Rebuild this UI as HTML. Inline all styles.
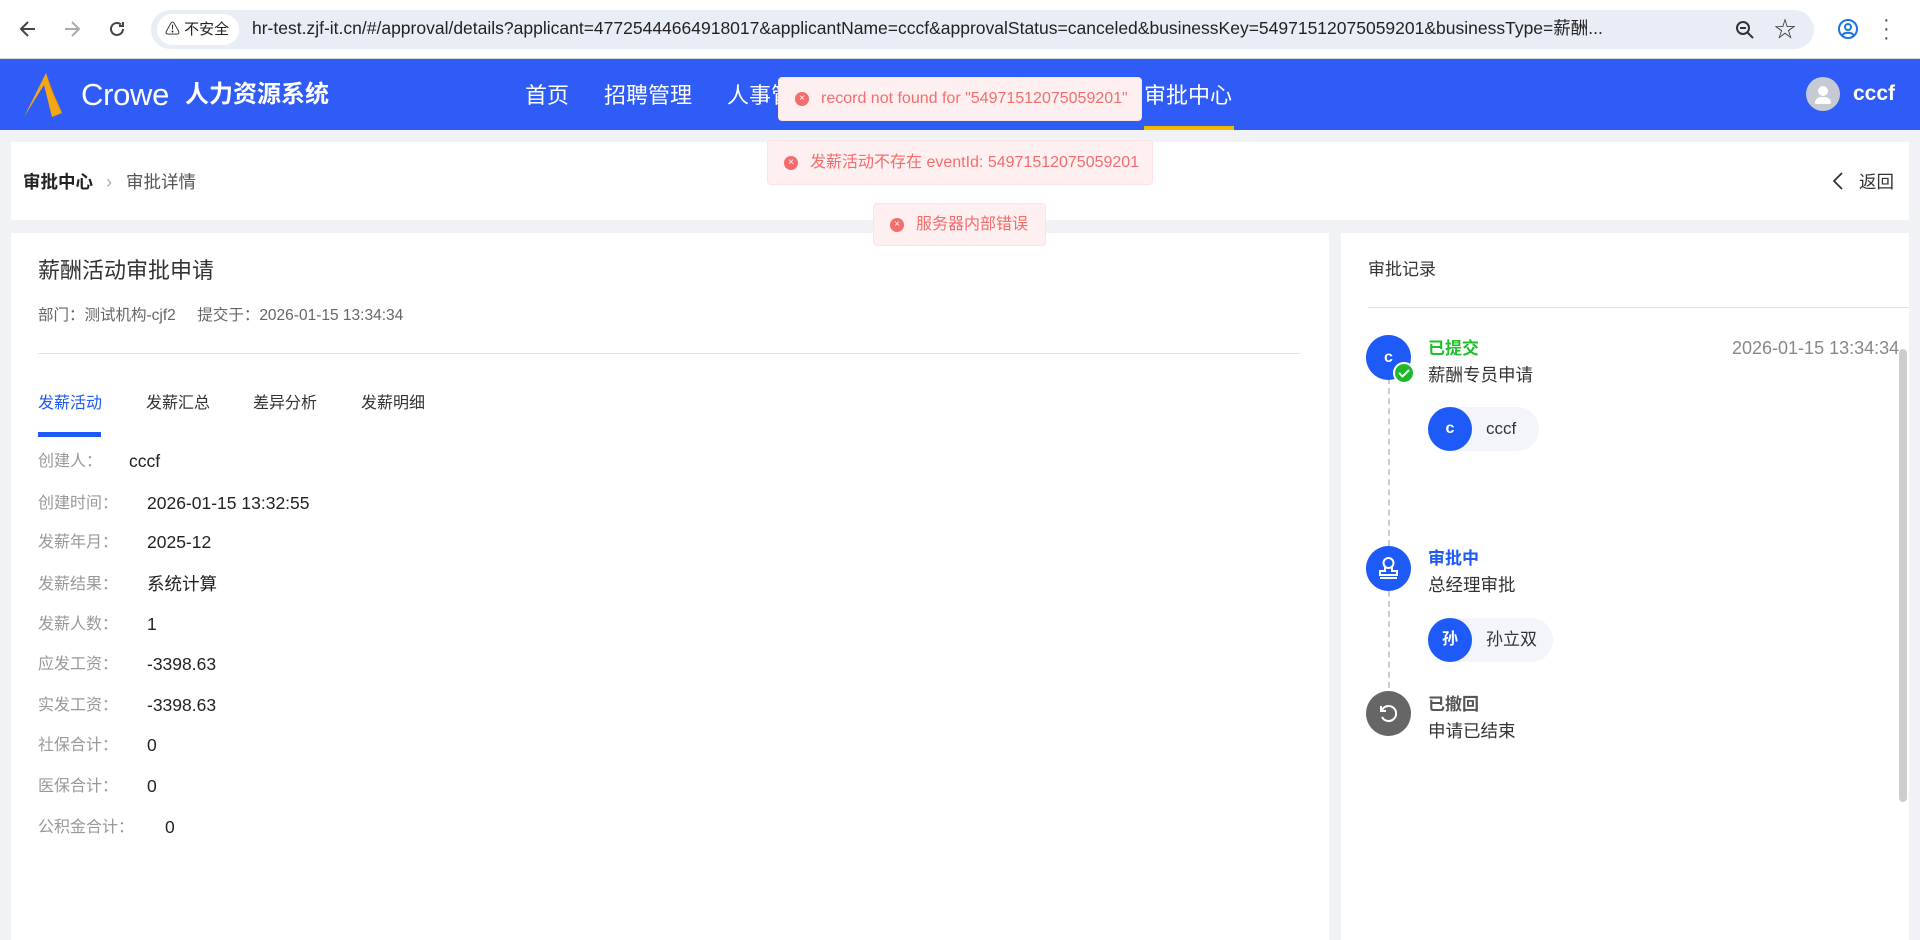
<!DOCTYPE html>
<html><head><meta charset="utf-8">
<style>
*{margin:0;padding:0;box-sizing:border-box}
body{width:1920px;height:940px;overflow:hidden;background:#f0f2f5;font-family:"Liberation Sans","Noto Sans CJK SC",sans-serif;position:relative;color:#333}
.a{position:absolute;white-space:nowrap;line-height:1.25}
.chrome{left:0;top:0;width:1920px;height:59px;background:#fff;border-bottom:1px solid #dadce0}
.url{left:151px;top:10px;width:1663px;height:39px;background:#e9eef6;border-radius:20px}
.hdr{left:0;top:59px;width:1920px;height:71px;background:#2f5bf6}
.nav{top:82px;color:#fff;font-size:22px}
.toast{background:#fef0f0;border:1px solid #fde2e2;border-radius:4px;color:#f56c6c;font-size:16px;display:flex;align-items:center;padding-left:16px}
.toast i{display:inline-block;width:14px;height:14px;border-radius:50%;background:#f56c6c;color:#fff;font-style:normal;font-size:10px;line-height:14px;text-align:center;margin-right:12px}
.card{background:#fff}
.lab{color:#999;font-size:16px;line-height:22px;margin-top:3px}
.val{color:#222;font-size:17.5px;line-height:22px;margin-top:2px}
.dot{width:45px;height:45px;border-radius:50%;background:#1e5af8;color:#fff;text-align:center;line-height:45px;font-weight:bold}
.chip{height:44px;border-radius:22px;background:#f3f5fa;font-size:17px;color:#333;line-height:44px}
.chip b{display:inline-block;width:44px;height:44px;border-radius:50%;background:#1e5af8;color:#fff;text-align:center;vertical-align:top;margin-right:14px;font-size:16px}
</style></head><body>
<div class="a chrome"></div>
<svg class="a" style="left:18px;top:19px" width="20" height="20" viewBox="0 0 20 20"><path d="M17 10H4M10 3L3 10l7 7" stroke="#444" stroke-width="2" fill="none"/></svg>
<svg class="a" style="left:62px;top:19px" width="20" height="20" viewBox="0 0 20 20"><path d="M3 10h13M10 3l7 7-7 7" stroke="#aaa" stroke-width="2" fill="none"/></svg>
<svg class="a" style="left:107px;top:19px" width="20" height="20" viewBox="0 0 20 20"><path d="M16 10a6 6 0 1 1-2-4.5M16 3v4h-4" stroke="#444" stroke-width="2" fill="none"/></svg>
<div class="a url"></div>
<div class="a" style="left:157px;top:14px;width:82px;height:31px;background:#fff;border-radius:16px;font-size:15px;line-height:31px;padding-left:8px;color:#222">⚠ 不安全</div>
<div class="a" style="left:252px;top:18px;font-size:17.5px;color:#222">hr-test.zjf-it.cn/#/approval/details?applicant=47725444664918017&amp;applicantName=cccf&amp;approvalStatus=canceled&amp;businessKey=54971512075059201&amp;businessType=薪酬...</div>
<svg class="a" style="left:1734px;top:19px" width="22" height="22" viewBox="0 0 22 22"><circle cx="9" cy="9" r="6" stroke="#333" stroke-width="2" fill="none"/><path d="M13.5 13.5L19 19M6 9h6" stroke="#333" stroke-width="2"/></svg>
<div class="a" style="left:1774px;top:16px;font-size:22px;color:#333">☆</div>
<svg class="a" style="left:1836px;top:17px" width="24" height="24" viewBox="0 0 24 24"><circle cx="12" cy="12" r="9" stroke="#1a73e8" stroke-width="2" fill="none"/><circle cx="12" cy="10" r="3" stroke="#1a73e8" stroke-width="2" fill="none"/><path d="M6.5 18c2-3 9-3 11 0" stroke="#1a73e8" stroke-width="2" fill="none"/></svg>
<div class="a" style="left:1883px;top:16px;font-size:20px;color:#444;line-height:9px">·<br>·<br>·</div>

<div class="a hdr"></div>
<svg class="a" style="left:22px;top:71px" width="48" height="48" viewBox="0 0 48 48"><path d="M24 2L2 46 22 14 30 46 40 42 27 12z" fill="#f3a712"/><path d="M24 2L38 40 28 16z" fill="#e08a0a"/></svg>
<div class="a" style="left:81px;top:76px;font-size:31px;color:#fff;letter-spacing:-0.3px">Crowe</div>
<div class="a" style="left:185px;top:80px;font-size:24px;color:#fff;font-weight:bold">人力资源系统</div>
<div class="a nav" style="left:525px">首页</div>
<div class="a nav" style="left:604px">招聘管理</div>
<div class="a nav" style="left:727px">人事管理</div>
<div class="a nav" style="left:1144px">审批中心</div>
<div class="a" style="left:1144px;top:126px;width:90px;height:4px;background:#f5b800"></div>
<div class="a" style="left:1806px;top:77px;width:34px;height:34px;border-radius:50%;background:#c6cad3"><div style="position:absolute;left:12px;top:9px;width:10px;height:10px;border-radius:50%;background:#fff"></div><div style="position:absolute;left:9px;top:20px;width:16px;height:7px;border-radius:6px 6px 1px 1px;background:#fff"></div></div>
<div class="a" style="left:1853px;top:81px;font-size:21px;color:#fff;font-weight:bold">cccf</div>

<div class="a card" style="left:11px;top:142px;width:1898px;height:78px"></div>
<div class="a" style="left:23px;top:172px;font-size:17.5px;font-weight:bold;color:#222">审批中心</div>
<div class="a" style="left:106px;top:171px;font-size:18px;color:#aaa">›</div>
<div class="a" style="left:126px;top:172px;font-size:17.5px;color:#555">审批详情</div>
<svg class="a" style="left:1832px;top:171px" width="12" height="20" viewBox="0 0 12 20"><path d="M10 2L2 10l8 8" stroke="#333" stroke-width="1.8" fill="none"/></svg>
<div class="a" style="left:1859px;top:172px;font-size:17.5px;color:#333">返回</div>

<div class="a card" style="left:11px;top:233px;width:1318px;height:707px"></div>
<div class="a" style="left:38px;top:257px;font-size:22px;color:#333">薪酬活动审批申请</div>
<div class="a" style="left:38px;top:306px;font-size:15.5px;color:#666">部门：测试机构-cjf2 &nbsp;&nbsp;&nbsp; 提交于：2026-01-15 13:34:34</div>
<div class="a" style="left:38px;top:353px;width:1262px;height:1px;background:#e2e2e2"></div>
<div class="a" style="left:38px;top:394px;font-size:16px;color:#1e5af8">发薪活动</div>
<div class="a" style="left:146px;top:394px;font-size:16px;color:#333">发薪汇总</div>
<div class="a" style="left:253px;top:394px;font-size:16px;color:#333">差异分析</div>
<div class="a" style="left:361px;top:394px;font-size:16px;color:#333">发薪明细</div>
<div class="a" style="left:38px;top:432px;width:63px;height:5px;background:#1e5af8"></div>

<div class="a lab" style="left:38px;top:448px">创建人：</div><div class="a val" style="left:129px;top:448px">cccf</div>
<div class="a lab" style="left:38px;top:490px">创建时间：</div><div class="a val" style="left:147px;top:490px">2026-01-15 13:32:55</div>
<div class="a lab" style="left:38px;top:529px">发薪年月：</div><div class="a val" style="left:147px;top:529px">2025-12</div>
<div class="a lab" style="left:38px;top:571px">发薪结果：</div><div class="a val" style="left:147px;top:571px">系统计算</div>
<div class="a lab" style="left:38px;top:611px">发薪人数：</div><div class="a val" style="left:147px;top:611px">1</div>
<div class="a lab" style="left:38px;top:651px">应发工资：</div><div class="a val" style="left:147px;top:651px">-3398.63</div>
<div class="a lab" style="left:38px;top:692px">实发工资：</div><div class="a val" style="left:147px;top:692px">-3398.63</div>
<div class="a lab" style="left:38px;top:732px">社保合计：</div><div class="a val" style="left:147px;top:732px">0</div>
<div class="a lab" style="left:38px;top:773px">医保合计：</div><div class="a val" style="left:147px;top:773px">0</div>
<div class="a lab" style="left:38px;top:814px">公积金合计：</div><div class="a val" style="left:165px;top:814px">0</div>

<div class="a card" style="left:1341px;top:233px;width:568px;height:707px"></div>
<div class="a" style="left:1368px;top:259px;font-size:17px;color:#333">审批记录</div>
<div class="a" style="left:1368px;top:307px;width:541px;height:1px;background:#e2e2e2"></div>
<div class="a" style="left:1388px;top:378px;width:0;height:320px;border-left:2px dashed #ccc"></div>
<div class="a dot" style="left:1366px;top:335px;font-size:16px">c</div>
<div class="a" style="left:1393px;top:362px;width:22px;height:22px;border-radius:50%;background:#1fb82c;border:2px solid #fff"><svg width="18" height="18" viewBox="0 0 18 18" style="display:block"><path d="M4 9l3.5 3.5L14 6" stroke="#fff" stroke-width="2" fill="none"/></svg></div>
<div class="a" style="left:1428px;top:338px;font-size:17px;font-weight:bold;color:#1fbf2b">已提交</div>
<div class="a" style="left:1732px;top:337px;font-size:18px;color:#888">2026-01-15 13:34:34</div>
<div class="a" style="left:1428px;top:365px;font-size:17.5px;color:#333">薪酬专员申请</div>
<div class="a chip" style="left:1428px;top:407px;width:111px"><b>c</b>cccf</div>

<div class="a dot" style="left:1366px;top:546px"><svg width="45" height="45" viewBox="0 0 45 45"><circle cx="22.5" cy="17" r="5" stroke="#fff" stroke-width="2" fill="none"/><path d="M19 21v4h-5v4h17v-4h-5v-4M14 32h17" stroke="#fff" stroke-width="2" fill="none"/></svg></div>
<div class="a" style="left:1428px;top:548px;font-size:17px;font-weight:bold;color:#1e5af8">审批中</div>
<div class="a" style="left:1428px;top:575px;font-size:17.5px;color:#333">总经理审批</div>
<div class="a chip" style="left:1428px;top:618px;width:125px"><b>孙</b>孙立双</div>

<div class="a dot" style="left:1366px;top:691px;background:#666"><svg width="45" height="45" viewBox="0 0 45 45"><path d="M16 19a7.5 7.5 0 1 1 0 7" stroke="#fff" stroke-width="2" fill="none"/><path d="M15 15v5h5" stroke="#fff" stroke-width="2" fill="none"/></svg></div>
<div class="a" style="left:1428px;top:694px;font-size:17px;font-weight:bold;color:#555">已撤回</div>
<div class="a" style="left:1428px;top:721px;font-size:17.5px;color:#333">申请已结束</div>
<div class="a" style="left:1899px;top:349px;width:8px;height:453px;border-radius:4px;background:#cdcdcd"></div>

<div class="a toast" style="left:778px;top:77px;width:364px;height:44px"><i>×</i>record not found for "54971512075059201"</div>
<div class="a toast" style="left:767px;top:140px;width:386px;height:45px"><i>×</i>发薪活动不存在 eventId: 54971512075059201</div>
<div class="a toast" style="left:873px;top:203px;width:173px;height:43px"><i>×</i>服务器内部错误</div>
</body></html>
